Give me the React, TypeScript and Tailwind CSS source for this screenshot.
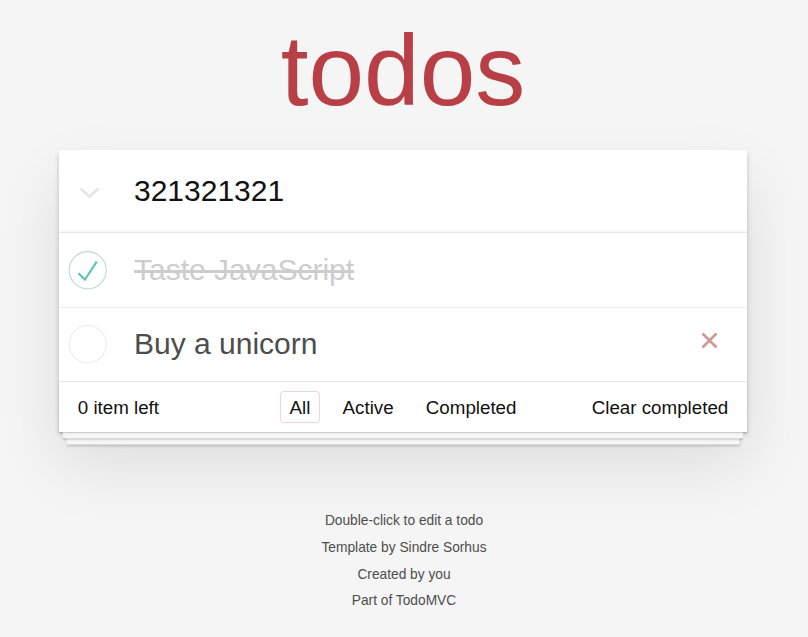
import React from "react";

function Circle({ checked }: { checked: boolean }) {
  return (
    <svg width="50" height="50" viewBox="-10 -18 100 135" className="block">
      <circle cx="50" cy="50" r="50" fill="none" stroke={checked ? "#bddad5" : "#ededed"} strokeWidth="3" />
      {checked && <path fill="#5dc2af" d="M72 25L42 71 27 56l-4 4 20 20 34-52z" />}
    </svg>
  );
}

export default function App() {
  return (
    <div className="min-h-screen bg-[#f5f5f5] font-['Liberation_Sans',Arial,sans-serif] pb-10">
      <h1 className="pt-[20px] pr-[2px] text-center text-[100px] leading-[100px] font-extralight text-[#b83f45]">todos</h1>
      <section className="mt-[30px] ml-[59px] w-[688px] bg-white shadow-[0_2.5px_5px_0_rgba(0,0,0,0.2),0_31px_62px_0_rgba(0,0,0,0.1)]">
        <div className="h-[82px] flex items-center shadow-[inset_0_-2px_1px_rgba(0,0,0,0.03)]">
          <div className="w-[75px] pl-[20px] flex items-center mt-[4px]">
            <svg width="21" height="12" viewBox="0 0 21 12">
              <polyline points="1.5,1.5 10.5,9.5 19.5,1.5" fill="none" stroke="#e6e6e6" strokeWidth="3" />
            </svg>
          </div>
          <div className="text-[30px] leading-[42px] text-[#111111]">321321321</div>
        </div>
        <ul className="border-t border-[#e6e6e6]">
          <li className="flex items-center border-b border-[#ededed]">
            <div className="w-[75px] flex items-center">
              <Circle checked />
            </div>
            <span className="py-[18.75px] text-[30px] leading-[36px] text-[#cdcdcd] line-through">Taste JavaScript</span>
          </li>
          <li className="flex items-center">
            <div className="w-[75px] flex items-center">
              <Circle checked={false} />
            </div>
            <span className="py-[18.75px] text-[30px] leading-[36px] text-[#4d4d4d]">Buy a unicorn</span>
            <div className="ml-auto mr-[29px] mb-[7px]">
              <svg width="17" height="17" viewBox="0 0 17 17" className="block">
                <path d="M1.5 1.5L15.5 15.5M15.5 1.5L1.5 15.5" stroke="#cc9a9a" strokeWidth="2.8" />
              </svg>
            </div>
          </li>
        </ul>
        <footer className="h-[51px] grid grid-cols-[1fr_auto_1fr] items-center px-[18.75px] border-t border-[#e6e6e6] bg-white text-[18.75px] leading-[23px] text-[#111111] shadow-[0_1.25px_1.25px_rgba(0,0,0,0.2),0_10px_0_-3.75px_#f6f6f6,0_11.25px_1.25px_-3.75px_rgba(0,0,0,0.2),0_20px_0_-7.5px_#f6f6f6,0_21.25px_2.5px_-7.5px_rgba(0,0,0,0.2)]">
          <span className="justify-self-start">0 item left</span>
          <div className="flex items-center gap-[12.7px]">
            <span className="px-[8.75px] py-[3.75px] rounded-[3.75px] border border-[rgba(175,47,47,0.2)]">All</span>
            <span className="px-[8.75px] py-[3.75px] rounded-[3.75px] border border-transparent">Active</span>
            <span className="px-[8.75px] py-[3.75px] rounded-[3.75px] border border-transparent">Completed</span>
          </div>
          <span className="justify-self-end">Clear completed</span>
        </footer>
      </section>
      <div className="mt-[82px] flex flex-col gap-[13px] text-center text-[13.75px] leading-[13.75px] text-[#4d4d4d]">
        <p>Double-click to edit a todo</p>
        <p>Template by Sindre Sorhus</p>
        <p>Created by you</p>
        <p>Part of TodoMVC</p>
      </div>
    </div>
  );
}
